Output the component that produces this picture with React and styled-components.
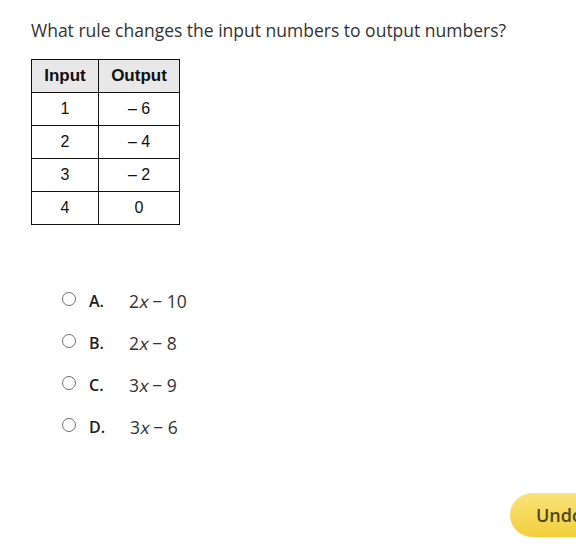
import React from "react";
import styled, { createGlobalStyle } from "styled-components";

const Global = createGlobalStyle`
  html, body { margin: 0; padding: 0; background: #fff; overflow: hidden; }
  body { font-family: "Open Sans", "Liberation Sans", sans-serif; color: #333; }
`;

const Page = styled.div`
  width: 576px;
  height: 555px;
  box-sizing: border-box;
  padding: 17px 0 0 31px;
  display: flex;
  flex-direction: column;
  align-items: flex-start;
`;

const Question = styled.p`
  margin: 0;
  font-size: 17.5px;
  line-height: 26px;
  color: #333;
`;

const Table = styled.table`
  margin-top: 16px;
  border-collapse: collapse;
  font-family: "Liberation Sans", Arial, sans-serif;
  color: #111;
`;

const HeadCell = styled.th`
  border: 1px solid #111;
  background: #e8e8e8;
  font-weight: bold;
  font-size: 17px;
  height: 32px;
  padding: 0;
  width: ${(p) => p.$w}px;
  text-align: center;
`;

const Cell = styled.td`
  border: 1px solid #111;
  font-size: 16px;
  height: 32px;
  padding: 0;
  text-align: center;
`;

const Options = styled.div`
  margin-top: 64px;
  margin-left: 31px;
  display: flex;
  flex-direction: column;
  gap: 18px;
`;

const Option = styled.label`
  display: flex;
  align-items: center;
  height: 24px;
  font-size: 16px;
  color: #333;
`;

const Radio = styled.span`
  width: 12px;
  height: 12px;
  border: 1.5px solid #6f6f6f;
  border-radius: 50%;
  margin-right: 13px;
  margin-top: -4px;
  flex: none;
`;

const Letter = styled.span`
  font-weight: 600;
  width: 40px;
  color: #1e1e1e;
`;

const Expr = styled.span`
  font-size: 17.5px;
  color: #333;
  margin-left: ${(p) => p.$shift || 0}px;
`;

const Var = styled.span`
  display: inline-block;
  transform: skewX(-12deg);
  margin: 0 3px 0 1px;
`;

const Footer = styled.div`
  margin-top: auto;
  padding-left: 479px;
  padding-bottom: 18px;
  display: flex;
`;

const UndoButton = styled.button`
  flex: none;
  height: 44px;
  padding: 0 26px;
  border: none;
  border-radius: 22px;
  background: linear-gradient(#f9e37a, #f2cf3a);
  font-family: "Open Sans", "Liberation Sans", sans-serif;
  font-size: 18px;
  font-weight: 600;
  color: #4f4520;
`;

const rows = [
  ["1", "– 6"],
  ["2", "– 4"],
  ["3", "– 2"],
  ["4", "0"],
];

const choices = [
  ["A.", "2", "10", 0],
  ["B.", "2", "8", 0],
  ["C.", "3", "9", 0],
  ["D.", "3", "6", 1],
];

export default function App() {
  return (
    <>
      <Global />
      <Page>
        <Question>What rule changes the input numbers to output numbers?</Question>
        <Table>
          <thead>
            <tr>
              <HeadCell $w={66}>Input</HeadCell>
              <HeadCell $w={80}>Output</HeadCell>
            </tr>
          </thead>
          <tbody>
            {rows.map(([a, b]) => (
              <tr key={a}>
                <Cell>{a}</Cell>
                <Cell>{b}</Cell>
              </tr>
            ))}
          </tbody>
        </Table>
        <Options>
          {choices.map(([l, c, k, s]) => (
            <Option key={l}>
              <Radio />
              <Letter>{l}</Letter>
              <Expr $shift={s}>
                {c}
                <Var>x</Var>− {k}
              </Expr>
            </Option>
          ))}
        </Options>
        <Footer>
          <UndoButton>Undo</UndoButton>
        </Footer>
      </Page>
    </>
  );
}
